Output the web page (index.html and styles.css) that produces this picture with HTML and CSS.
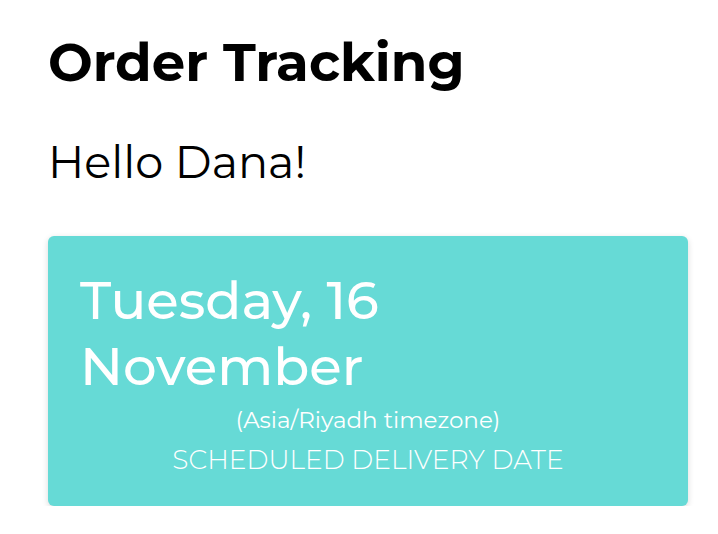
FILE: index.html
```html
<!DOCTYPE html>
<html>
	<head>
		<meta charset="utf-8">
		<title>Order Tracking</title>
		<link rel="stylesheet" href="styles.css">
	</head>
	<body>
		<div class="page">
			<h1 class="title">Order Tracking</h1>
			<p class="greeting">Hello Dana!</p>
			<div class="delivery">
				<div class="delivery-date">Tuesday, 16<br>November</div>
				<div class="delivery-zone">(Asia/Riyadh timezone)</div>
				<div class="delivery-label">SCHEDULED DELIVERY DATE</div>
			</div>
		</div>
	</body>
</html>
```
FILE: styles.css
```css
*{
    margin: 0;
    padding: 0;
    box-sizing: border-box;
}
body{
    font-family: "Montserrat", "Inter", "Noto Sans", sans-serif;
    color: #000;
    background: #fff;
}
.page{
    padding: 30px 30px 0 48px;
}
.title{
    font-size: 53px;
    line-height: 64px;
    font-weight: 700;
}
.greeting{
    margin-top: 40px;
    font-size: 44.6px;
    line-height: 56px;
    font-weight: 400;
}
.delivery{
    margin-top: 46px;
    padding: 31px 32px 30px;
    background-color: #66dad6;
    color: #fff;
    border-radius: 6px;
    box-shadow: 0 2px 6px rgba(0, 0, 0, 0.15);
}
.delivery-date{
    font-size: 53px;
    line-height: 66px;
    font-weight: 500;
}
.delivery-zone{
    margin-top: 7px;
    text-align: center;
    font-size: 23px;
    line-height: 28px;
}
.delivery-label{
    margin-top: 10px;
    text-align: center;
    font-size: 26.5px;
    line-height: 32px;
    font-weight: 300;
}
```
